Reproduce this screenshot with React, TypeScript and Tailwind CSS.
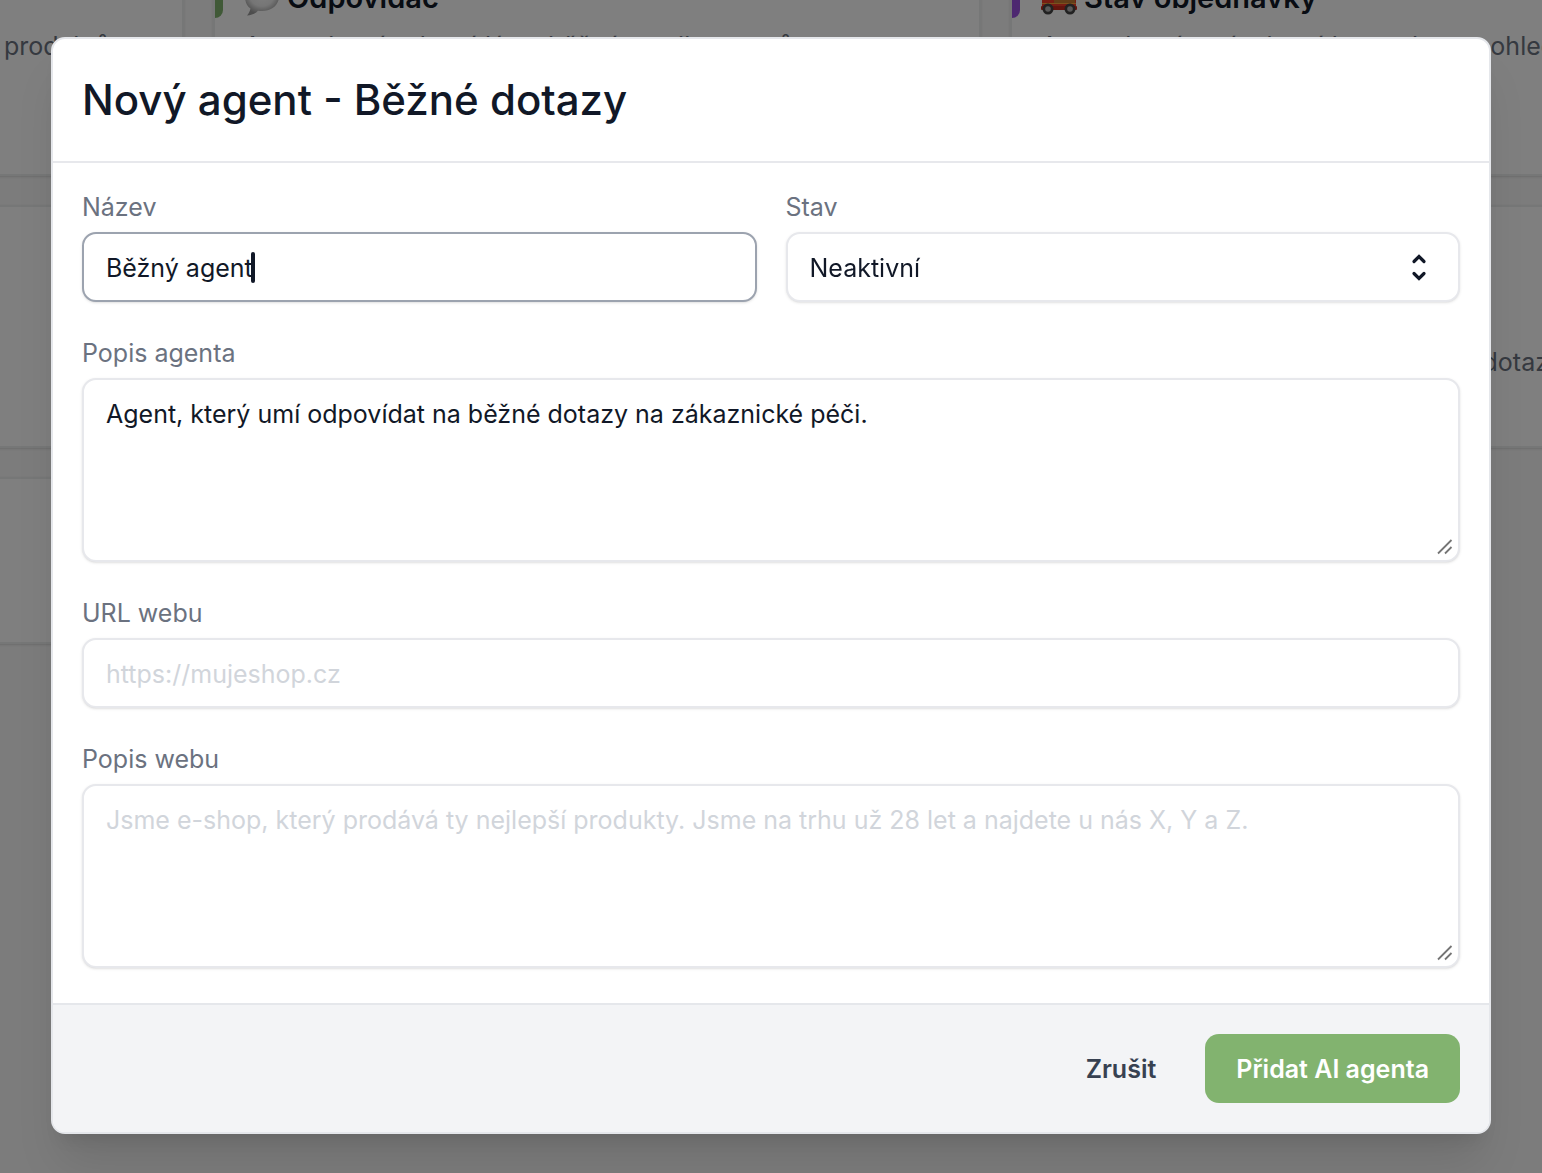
import { useEffect, useRef, useState } from "react";

const field =
  "block w-full rounded-[14px] border-2 border-[#e7e8ec] bg-white px-[22px] text-[25px] leading-9 text-[#111827] shadow-sm outline-none placeholder:text-[#d1d5db]";
const label = "block text-[25px] leading-9 text-[#6b7280]";

function SpeechBubble() {
  return (
    <svg viewBox="0 0 36 36" className="h-9 w-9 shrink-0" aria-hidden="true">
      <defs>
        <radialGradient id="bubble" cx="50%" cy="35%" r="62%">
          <stop offset="0" stopColor="#ffffff" />
          <stop offset="0.6" stopColor="#ececec" />
          <stop offset="1" stopColor="#9a9a9a" />
        </radialGradient>
      </defs>
      <path
        d="M18 2C8.500 2 1 8 1 16.500c0 5.500 2 9.500 5.500 12-.6 2.700-1.700 5-3.500 7 4.500-.3 8.500-2 11-4.800 1.300.2 2.600.3 4 .3 9.500 0 17-6 17-14.500S27.500 2 18 2z"
        fill="url(#bubble)"
      />
    </svg>
  );
}

function Truck() {
  return (
    <svg viewBox="0 0 36 36" className="h-9 w-9 shrink-0" aria-hidden="true">
      <rect x="2" y="6" width="33" height="6" rx="1" fill="#c9c9c9" />
      <path d="M1 14l3-4h10v4h21v15H1z" fill="#f03a26" />
      <rect x="13" y="14" width="21" height="9" fill="#c47a30" />
      <path d="M3 15l2-3h6v6H3z" fill="#8fc6e8" />
      <rect x="1" y="23" width="34" height="1" fill="#f7a23b" />
      <rect x="0" y="26" width="36" height="4" rx="1" fill="#c92a1c" />
      <circle cx="7" cy="29" r="5.500" fill="#444444" />
      <circle cx="7" cy="29" r="2.800" fill="#b5b5b5" />
      <circle cx="29" cy="29" r="5.500" fill="#444444" />
      <circle cx="29" cy="29" r="2.800" fill="#b5b5b5" />
    </svg>
  );
}

function ResizeGrip() {
  return (
    <svg
      viewBox="0 0 16 16"
      className="pointer-events-none absolute bottom-[7px] right-[7px] h-4 w-4"
      fill="none"
      stroke="#757575"
      strokeWidth="1.8"
      aria-hidden="true"
    >
      <path d="M1 14.500L14.500 1M8 14.500L14.500 8" />
    </svg>
  );
}

type CardProps = {
  accent?: string;
  icon?: React.ReactNode;
  title?: string;
  text?: string;
  textClass?: string;
};

function AgentCard({ accent, icon, title, text, textClass = "mt-[10px]" }: CardProps) {
  return (
    <article className="flex border-2 border-[#eceeef] bg-white shadow-sm">
      {accent && <div className={`mt-[25px] h-12 w-2 shrink-0 rounded-r-lg ${accent}`} />}
      <div className={`min-w-0 flex-1 pt-[33px] ${accent ? "pl-[21px] pr-4" : "px-[29px]"}`}>
        <h2 className="flex h-10 items-center gap-[7px] text-[29px] font-semibold leading-10 text-[#111827]">
          {icon}
          {title}
        </h2>
        <p className={`whitespace-nowrap text-[25px] leading-9 text-[#6b7280] ${textClass}`}>{text}</p>
      </div>
    </article>
  );
}

function AgentsPage() {
  return (
    <main className="fixed inset-0 overflow-hidden bg-[#f9f9f9]" aria-hidden="true">
      <div className="-ml-[584px] -mt-[57px] grid w-max grid-cols-[repeat(3,768px)] grid-rows-[233px_243px_167px] gap-[29px]">
        <AgentCard text="produktů" textClass="mt-[10px] pr-[43px] text-right" />
        <AgentCard
          accent="bg-[#81b36f]"
          icon={<SpeechBubble />}
          title="Odpovídač"
          text="Agent, který odpovídá na běžné emaily agentů"
        />
        <AgentCard
          accent="bg-[#9a51e0]"
          icon={<Truck />}
          title="Stav objednávky"
          text="Agent, který umí odpovídat na dotazy ohledně"
        />
        <AgentCard />
        <AgentCard />
        <AgentCard text="Agent, který umí odpovídat na běžné dotazy" textClass="mt-16" />
        <AgentCard />
      </div>
    </main>
  );
}

export default function App() {
  const nameRef = useRef<HTMLInputElement>(null);
  const [name, setName] = useState("Běžný agent");
  const [focused, setFocused] = useState(true);
  const [about, setAbout] = useState("Agent, který umí odpovídat na běžné dotazy na zákaznické péči.");

  useEffect(() => {
    nameRef.current?.focus();
  }, []);

  return (
    <div className="min-h-screen font-['Inter',sans-serif]">
      <AgentsPage />
      <div className="fixed inset-0 overflow-y-auto bg-black/50 px-[51px] pb-10 pt-[37px]">
        <form
          role="dialog"
          aria-modal="true"
          aria-labelledby="dialog-title"
          onSubmit={(e) => e.preventDefault()}
          className="overflow-hidden rounded-[14px] border-2 border-[#e5e7eb] bg-white shadow-[0_36px_46px_-9px_rgba(0,0,0,0.1),0_14px_18px_-11px_rgba(0,0,0,0.1)]"
        >
          <header className="border-b-2 border-[#e7e8ec] px-[29px] py-[31px]">
            <h1 id="dialog-title" className="text-[42px] font-medium leading-[60px] text-[#111827]">
              Nový agent - Běžné dotazy
            </h1>
          </header>

          <div className="flex flex-col gap-[33px] px-[29px] pb-[35px] pt-[26px]">
            <div className="grid grid-cols-2 gap-[29px]">
              <div className="flex flex-col gap-[7px]">
                <label htmlFor="name" className={label}>Název</label>
                <div className="relative">
                  <input
                    id="name"
                    ref={nameRef}
                    value={name}
                    onChange={(e) => setName(e.target.value)}
                    onFocus={() => setFocused(true)}
                    onBlur={() => setFocused(false)}
                    className={`${field} h-[70px] pt-0.5 caret-transparent focus:border-[#9ca3af]`}
                  />
                  {focused && (
                    <div
                      className="pointer-events-none absolute inset-0 flex items-center px-6 text-[25px]"
                      aria-hidden="true"
                    >
                      <span className="invisible whitespace-pre">{name}</span>
                      <span className="-ml-0.5 h-[31px] w-1 rounded-full bg-[#111827]" />
                    </div>
                  )}
                </div>
              </div>
              <div className="flex flex-col gap-[7px]">
                <label htmlFor="status" className={label}>Stav</label>
                <div className="relative">
                  <select id="status" defaultValue="off" className={`${field} h-[70px] appearance-none pt-0.5`}>
                    <option value="off">Neaktivní</option>
                    <option value="on">Aktivní</option>
                  </select>
                  <svg
                    viewBox="0 0 16 30"
                    className="pointer-events-none absolute right-[33px] top-5 h-[30px] w-4"
                    fill="none"
                    stroke="#111827"
                    strokeWidth="3.2"
                    strokeLinecap="round"
                    strokeLinejoin="miter"
                    aria-hidden="true"
                  >
                    <path d="M3 9.500l5-5 5 5M3 21.500l5 5 5-5" />
                  </svg>
                </div>
              </div>
            </div>

            <div className="flex flex-col gap-[7px]">
              <label htmlFor="about" className={label}>Popis agenta</label>
              <div className="relative">
                <textarea
                  id="about"
                  value={about}
                  onChange={(e) => setAbout(e.target.value)}
                  className={`${field} h-[184px] resize-none py-4`}
                />
                <ResizeGrip />
              </div>
            </div>

            <div className="flex flex-col gap-[7px]">
              <label htmlFor="url" className={label}>URL webu</label>
              <input id="url" type="url" placeholder="https://mujeshop.cz" className={`${field} h-[70px] pt-0.5`} />
            </div>

            <div className="flex flex-col gap-[7px]">
              <label htmlFor="site" className={label}>Popis webu</label>
              <div className="relative">
                <textarea
                  id="site"
                  placeholder="Jsme e-shop, který prodává ty nejlepší produkty. Jsme na trhu už 28 let a najdete u nás X, Y a Z."
                  className={`${field} h-[184px] resize-none py-4`}
                />
                <ResizeGrip />
              </div>
            </div>
          </div>

          <footer className="flex justify-end gap-[18px] border-t-2 border-[#e5e7eb] bg-[#f3f4f6] px-[29px] py-[29px]">
            <button type="button" className="h-[69px] rounded-[14px] px-[31px] pt-[3px] text-[25px] font-semibold text-[#374151]">
              Zrušit
            </button>
            <button type="submit" className="h-[69px] rounded-[14px] bg-[#82b36f] px-[31px] pt-[3px] text-[25px] font-semibold text-white">
              Přidat AI agenta
            </button>
          </footer>
        </form>
      </div>
    </div>
  );
}
